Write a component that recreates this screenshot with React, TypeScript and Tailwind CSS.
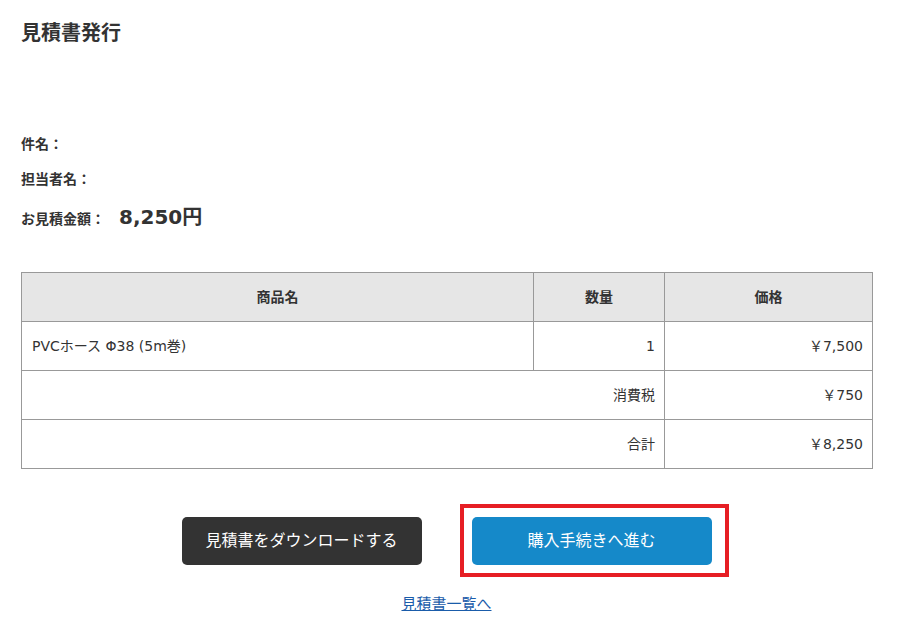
const font = { fontFamily: '"DejaVu Sans", "Noto Sans CJK JP", sans-serif' };

const rows = [
  { name: 'PVCホース Φ38 (5m巻)', qty: '1', price: '￥7,500' },
];

export default function App() {
  return (
    <div className="min-h-screen bg-white px-[21px] text-[#333]" style={font}>
      <h1 className="pt-[18px] text-[20px] font-bold leading-[30px]">見積書発行</h1>

      <div className="mt-[79px] flex flex-col text-[14px] font-bold">
        <div className="flex h-[35px] items-center">件名：</div>
        <div className="flex h-[35px] items-center">担当者名：</div>
        <div className="flex h-[38px] items-baseline pt-[5px]">
          <span className="leading-[30px]">お見積金額：</span>
          <span className="ml-[14px] text-[20px] leading-[30px]">8,250円</span>
        </div>
      </div>

      <table className="mt-[37px] w-[851px] table-fixed border-collapse text-[14px]">
        <colgroup>
          <col className="w-[512px]" />
          <col className="w-[131px]" />
          <col className="w-[208px]" />
        </colgroup>
        <thead>
          <tr className="bg-[#e6e6e6]">
            <th className="h-[49px] border border-[#999] font-bold">商品名</th>
            <th className="h-[49px] border border-[#999] font-bold">数量</th>
            <th className="h-[49px] border border-[#999] font-bold">価格</th>
          </tr>
        </thead>
        <tbody>
          {rows.map((r) => (
            <tr key={r.name}>
              <td className="h-[49px] border border-[#999] px-[10px]">{r.name}</td>
              <td className="h-[49px] border border-[#999] px-[9px] text-right">{r.qty}</td>
              <td className="h-[49px] border border-[#999] px-[9px] text-right">{r.price}</td>
            </tr>
          ))}
          <tr>
            <td colSpan={2} className="h-[49px] border border-[#999] px-[9px] text-right">消費税</td>
            <td className="h-[49px] border border-[#999] px-[9px] text-right">￥750</td>
          </tr>
          <tr>
            <td colSpan={2} className="h-[49px] border border-[#999] px-[9px] text-right">合計</td>
            <td className="h-[49px] border border-[#999] px-[9px] text-right">￥8,250</td>
          </tr>
        </tbody>
      </table>

      <div className="mt-[48px] flex w-[851px] justify-center gap-[50px]">
        <button className="h-[48px] w-[240px] rounded-[5px] bg-[#333] text-[16px] text-white">
          見積書をダウンロードする
        </button>
        <div className="relative">
          <button className="h-[48px] w-[240px] rounded-[5px] bg-[#1589c9] text-[16px] text-white">
            購入手続きへ進む
          </button>
          <span className="pointer-events-none absolute -top-[13px] -right-[17px] -bottom-[12px] -left-[12px] border-4 border-[#e61e24]" />
        </div>
      </div>

      <div className="mt-[28px] w-[851px] text-center text-[15px] leading-[22px]">
        <a href="#" className="text-[#1a5caa] underline">見積書一覧へ</a>
      </div>
    </div>
  );
}
